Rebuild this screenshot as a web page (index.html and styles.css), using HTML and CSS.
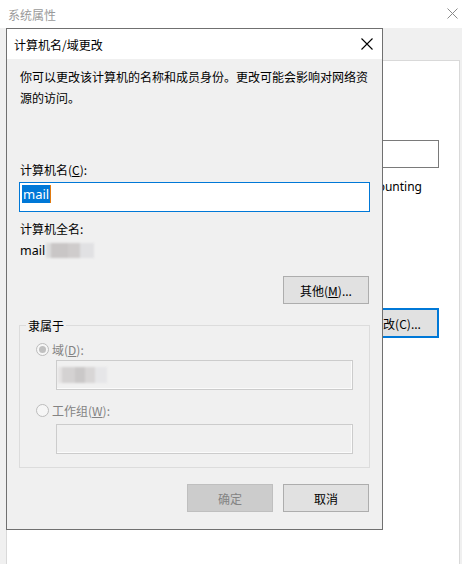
FILE: index.html
```html
<!DOCTYPE html>
<html lang="zh-CN">
<head>
<meta charset="utf-8">
<title>计算机名/域更改</title>
<link rel="stylesheet" href="styles.css">
</head>
<body>
<div class="bg-window">
  <div class="bg-title">
    <span class="bg-title-text">系统属性</span>
    <svg class="bg-close" width="11" height="11" viewBox="0 0 11 11"><path d="M0.5 0.5 L10.5 10.5 M10.5 0.5 L0.5 10.5" stroke="#8a8a8a" stroke-width="1" fill="none"/></svg>
  </div>
  <div class="bg-body">
    <div class="bg-panel">
      <div class="bg-col">
        <div class="bg-input"></div>
        <div class="bg-text">Accounting</div>
        <div class="bg-button">更改(C)...</div>
      </div>
    </div>
  </div>
</div>

<div class="dialog">
  <div class="dlg-title">
    <span class="dlg-title-text">计算机名/域更改</span>
    <svg class="dlg-close" width="12" height="12" viewBox="0 0 12 12"><path d="M0.5 0.5 L11.5 11.5 M11.5 0.5 L0.5 11.5" stroke="#000" stroke-width="1.1" fill="none"/></svg>
  </div>
  <div class="dlg-body">
    <p class="intro">你可以更改该计算机的名称和成员身份。更改可能会影响对网络资源的访问。</p>
    <div class="label name-label">计算机名(<u>C</u>):</div>
    <div class="name-input"><span class="sel">mail</span></div>
    <div class="label full-label">计算机全名:</div>
    <div class="label full-value">mail<span class="blur blur-a"></span></div>
    <div class="btn-row">
      <div class="btn">其他(<u>M</u>)...</div>
    </div>
    <fieldset class="group">
      <legend>隶属于</legend>
      <div class="radio-row">
        <span class="radio checked"></span>
        <span class="radio-label">域(<u>D</u>):</span>
      </div>
      <div class="dis-input"><span class="blur blur-b"></span></div>
      <div class="radio-row second">
        <span class="radio"></span>
        <span class="radio-label">工作组(<u>W</u>):</span>
      </div>
      <div class="dis-input"></div>
    </fieldset>
    <div class="btn-row bottom">
      <div class="btn disabled">确定</div>
      <div class="btn">取消</div>
    </div>
  </div>
</div>
</body>
</html>
```

FILE: styles.css
```css
* { box-sizing: border-box; }
html, body { margin: 0; padding: 0; }
body {
  width: 462px;
  height: 564px;
  overflow: hidden;
  font-family: "Noto Sans", "Noto Sans CJK SC", sans-serif;
  font-size: 12px;
  color: #000;
  position: relative;
}
u { text-decoration: underline; text-underline-offset: 1px; }

/* background window */
.bg-window {
  width: 462px;
  height: 564px;
  background: #f0f0f0;
  display: flex;
  flex-direction: column;
}
.bg-title {
  height: 28px;
  background: #fff;
  display: flex;
  align-items: center;
  justify-content: space-between;
  padding: 0 4px 0 8px;
}
.bg-title-text {
  color: #9a9a9a;
  font-family: "Noto Sans CJK SC", sans-serif;
  font-size: 12px;
}
.bg-close { margin-bottom: 2px; }
.bg-body {
  flex: 1;
  padding: 32px 2px 0 6px;
  display: flex;
}
.bg-panel {
  flex: 1;
  background: #fff;
  border: 1px solid #d9d9d9;
  border-bottom: none;
}
.bg-col {
  display: flex;
  flex-direction: column;
  align-items: flex-end;
  padding: 79px 20px 0 0;
}
.bg-input {
  width: 140px;
  height: 28px;
  border: 1px solid #7a7a7a;
  background: #fff;
}
.bg-text {
  margin-top: 8px;
  margin-right: 17px;
  line-height: 21px;
  font-size: 12px;
}
.bg-button {
  margin-top: 111px;
  width: 86px;
  height: 30px;
  border: 2px solid #0078d7;
  background: #e1e1e1;
  display: flex;
  align-items: center;
  justify-content: center;
  font-family: "Noto Sans CJK SC", sans-serif;
}

/* dialog */
.dialog {
  position: absolute;
  left: 6px;
  top: 28px;
  width: 377px;
  height: 502px;
  border: 1px solid #707070;
  background: #f0f0f0;
  display: flex;
  flex-direction: column;
}
.dlg-title {
  height: 30px;
  background: #fff;
  display: flex;
  align-items: center;
  justify-content: space-between;
  padding: 0 9px 0 7px;
  flex: none;
}
.dlg-title-text {
  font-family: "Noto Sans CJK SC", sans-serif;
  font-size: 12px;
}
.dlg-body {
  padding: 7px 12px 0 12px;
  display: flex;
  flex-direction: column;
  font-family: "Noto Sans CJK SC", sans-serif;
}
.intro {
  margin: 0;
  padding-left: 1px;
  line-height: 21px;
}
.label {
  line-height: 21px;
  padding-left: 1px;
}
.name-label { margin-top: 51px; }
.name-input {
  margin-top: 2px;
  width: 351px;
  height: 30px;
  border: 1px solid #0078d7;
  background: #fff;
  padding: 2px 0 0 2px;
  display: flex;
  align-items: flex-start;
}
.sel {
  background: #0078d7;
  color: #fff;
  font-family: "Noto Sans", sans-serif;
  font-size: 13px;
  line-height: 18px;
  padding: 0 1px;
  border-right: 1px solid #e07a10;
}
.full-label { margin-top: 6px; }
.full-value {
  margin-top: 1px;
  display: flex;
  align-items: center;
  font-family: "Noto Sans", sans-serif;
  font-size: 12.5px;
}
.blur {
  display: inline-block;
  height: 15px;
  filter: blur(0.8px);
}
.blur-a {
  width: 48px;
  margin-left: 1px;
  background: linear-gradient(90deg, #dcdcdc 0 10%, #c9c6c6 10% 45%, #cfcccc 45% 70%, #e1e1e3 70% 100%);
}
.btn-row {
  display: flex;
  justify-content: flex-end;
  gap: 10px;
  margin-top: 15px;
  padding-right: 1px;
}
.btn {
  width: 86px;
  height: 28px;
  border: 1px solid #adadad;
  background: #e1e1e1;
  display: flex;
  align-items: center;
  justify-content: center;
  font-size: 12px;
}
.btn.disabled {
  background: #cccccc;
  border-color: #bfbfbf;
  color: #838383;
}
.group {
  margin: 11px 0 0 0;
  width: 351px;
  border: 1px solid #dcdcdc;
  padding: 0 0 13px 0;
  min-width: 0;
}
.group legend {
  margin-left: 6px;
  padding: 0 2px;
  line-height: 21px;
  font-size: 12px;
}
.radio-row {
  display: flex;
  align-items: center;
  height: 21px;
  margin-top: 3px;
  padding-left: 16px;
}
.radio-row.second { margin-top: 10px; }
.radio {
  width: 13px;
  height: 13px;
  border-radius: 50%;
  border: 1px solid #bcbcbc;
  background: #f6f6f6;
  display: flex;
  align-items: center;
  justify-content: center;
}
.radio.checked::after {
  content: "";
  width: 7px;
  height: 7px;
  border-radius: 50%;
  background: #c0c0c0;
}
.radio-label {
  margin-left: 3px;
  color: #838383;
}
.dis-input {
  margin: 0 0 0 36px;
  width: 297px;
  height: 30px;
  border: 1px solid #cccccc;
  box-shadow: inset -1px -1px 0 #fbfbfb;
  background: #f0f0f0;
  display: flex;
  align-items: center;
}
.radio-row.second + .dis-input { margin-top: 3px; }
.blur-b {
  width: 49px;
  margin-left: 1px;
  height: 16px;
  background: linear-gradient(90deg, #e4e2e2 0 8%, #d4d2d2 8% 35%, #cac8c8 35% 55%, #d8d6d6 55% 75%, #e6e6e8 75% 100%);
}
.btn-row.bottom { margin-top: 16px; }
```
